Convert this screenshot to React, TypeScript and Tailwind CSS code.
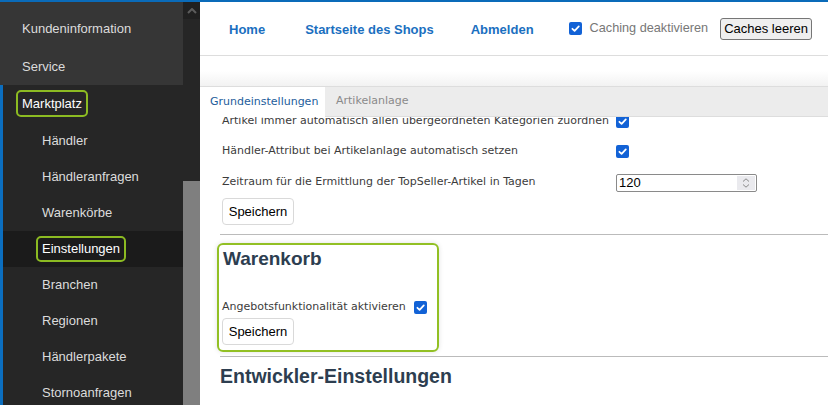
import React from 'react';

const SANS = { fontFamily: '"Liberation Sans", Arial, sans-serif' };
const TAHOMA = { fontFamily: '"DejaVu Sans", Verdana, sans-serif' };

const SUB_ITEMS = [
  { label: 'Händler', h: 'h-[37px]' },
  { label: 'Händleranfragen', h: 'h-[36px]' },
  { label: 'Warenkörbe', h: 'h-[36px]' },
  { label: 'Einstellungen', h: 'h-[36px]', active: true },
  { label: 'Branchen', h: 'h-[36px]' },
  { label: 'Regionen', h: 'h-[36px]' },
  { label: 'Händlerpakete', h: 'h-[36px]' },
  { label: 'Stornoanfragen', h: 'h-[36px]' },
];

function Check() {
  return (
    <span className="inline-flex h-[13px] w-[13px] shrink-0 items-center justify-center rounded-[2px] bg-[#1262d6]">
      <svg viewBox="0 0 12 12" className="h-[11px] w-[11px]">
        <path
          d="M2.6 6.3 L5 8.6 L9.6 3.6"
          stroke="white"
          strokeWidth="1.9"
          fill="none"
          strokeLinecap="round"
          strokeLinejoin="round"
        />
      </svg>
    </span>
  );
}

function SaveButton() {
  return (
    <button
      type="button"
      className="flex h-[27px] w-[72px] items-center justify-center rounded-[4px] border border-[#d9d9d9] bg-white text-[13px] text-black"
      style={SANS}
    >
      Speichern
    </button>
  );
}

function Sidebar() {
  return (
    <div className="flex h-full w-[200px] shrink-0" style={SANS}>
      <div className="flex w-[183px] flex-col">
        {/* top level */}
        <div className="bg-[#363636] pt-[8px] text-[13px] text-[#dcdcdc]">
          <div className="flex h-[38px] items-center pl-[22px]">Kundeninformation</div>
          <div className="flex h-[37px] items-center pl-[22px]">Service</div>
        </div>
        {/* Marktplatz group */}
        <div className="flex-1 border-l-[3px] border-[#0b6ebf] bg-[#262626] text-[13px] text-[#dcdcdc]">
          <div className="flex h-[37px] items-center pl-[13px]">
            <span className="rounded-[5px] border-2 border-[#8cbb22] px-[4px] py-[4px] leading-[15px] text-white">
              Marktplatz
            </span>
          </div>
          {SUB_ITEMS.map((item) => (
            <div
              key={item.label}
              className={`flex items-center ${item.h} ${
                item.active ? 'bg-[#1b1b1b] pl-[33px] text-white' : 'pl-[39px]'
              }`}
            >
              {item.active ? (
                <span className="rounded-[5px] border-2 border-[#8cbb22] px-[4px] py-[3px] leading-[16px]">
                  {item.label}
                </span>
              ) : (
                item.label
              )}
            </div>
          ))}
        </div>
      </div>
      {/* scrollbar */}
      <div className="flex w-[17px] flex-col bg-[#262626]">
        <div className="flex h-[17px] items-center justify-center bg-[#202020]">
          <svg viewBox="0 0 10 6" className="h-[6px] w-[10px]">
            <path d="M1 5 L5 1 L9 5" stroke="#5c5c5c" strokeWidth="2" fill="none" />
          </svg>
        </div>
        <div className="h-[162px]" />
        <div className="flex-1 bg-[#7f7f7f]" />
      </div>
    </div>
  );
}

function Header() {
  return (
    <div
      className="flex h-[54px] items-center border-b border-[#dddddd] bg-white text-[13px]"
      style={SANS}
    >
      <a className="ml-[29px] pt-[3px] font-bold text-[#1b6fc0]">Home</a>
      <a className="ml-[40px] pt-[3px] font-bold text-[#1b6fc0]">Startseite des Shops</a>
      <a className="ml-[37px] pt-[3px] font-bold text-[#1b6fc0]">Abmelden</a>
      <div className="ml-[35px] flex items-center gap-[8px]">
        <Check />
        <span className="text-[12.7px] text-[#777777]">Caching deaktivieren</span>
      </div>
      <button
        type="button"
        className="ml-[12px] flex h-[22px] w-[92px] items-center justify-center rounded-[3px] border border-[#767676] bg-[#efefef] text-[13px] text-black"
      >
        Caches leeren
      </button>
    </div>
  );
}

function Tabs() {
  return (
    <div className="flex h-[31px] border-y border-[#dddddd] bg-[#ececec] text-[11px]" style={TAHOMA}>
      <div className="-mb-px flex w-[125px] items-center bg-white pl-[10px] text-[#1d5d9b]">
        Grundeinstellungen
      </div>
      <div className="flex items-center pl-[11px] text-[#8a8a8a]">Artikelanlage</div>
    </div>
  );
}

function SettingRow({ label, h, children }: { label: string; h: string; children: React.ReactNode }) {
  return (
    <div className={`flex items-center ${h}`}>
      <div className="w-[394px] text-[11px] text-[#3c3c3c]">{label}</div>
      {children}
    </div>
  );
}

function NumberInput() {
  return (
    <div className="flex h-[18px] w-[141px] items-center rounded-[2px] border border-[#8a8a8a] bg-white">
      <span className="flex-1 pl-[2px] text-[13px] leading-none text-black" style={SANS}>
        120
      </span>
      <span className="mr-px flex h-[14px] w-[18px] flex-col items-center justify-center bg-[#eaeaee]">
        <svg viewBox="0 0 10 12" className="h-[12px] w-[10px]">
          <path d="M2 4.5 L5 1.8 L8 4.5" stroke="#8a8a8a" strokeWidth="1" fill="none" />
          <path d="M2 7.5 L5 10.2 L8 7.5" stroke="#8a8a8a" strokeWidth="1" fill="none" />
        </svg>
      </span>
    </div>
  );
}

function Content() {
  return (
    <div className="flex-1 overflow-hidden bg-white pl-[20px]" style={TAHOMA}>
      <div className="-mt-[11px] pl-[2px]">
        <SettingRow label="Artikel immer automatisch allen übergeordneten Kategorien zuordnen" h="h-[30px]">
          <Check />
        </SettingRow>
        <SettingRow label="Händler-Attribut bei Artikelanlage automatisch setzen" h="h-[31px]">
          <Check />
        </SettingRow>
        <SettingRow label="Zeitraum für die Ermittlung der TopSeller-Artikel in Tagen" h="h-[31px]">
          <NumberInput />
        </SettingRow>
        <SaveButton />
      </div>

      <div className="mt-[9px] border-t border-[#bbbbbb]" />

      {/* Warenkorb */}
      <div className="ml-[-3px] mt-[8px] w-[222px] rounded-[6px] border-2 border-[#92c024] pb-[5px] pl-[3px] pt-[3px] shadow-[0_0_5px_rgba(0,0,0,0.12)]">
        <h2 className="ml-[1px] text-[19px] font-bold leading-[22px] text-[#2d3e50]" style={SANS}>
          Warenkorb
        </h2>
        <div className="mt-[29px] flex h-[17px] items-center gap-[8px]">
          <span className="text-[11px] text-[#3c3c3c]">Angebotsfunktionalität aktivieren</span>
          <Check />
        </div>
        <div className="mt-[2px]">
          <SaveButton />
        </div>
      </div>

      <div className="mt-[4px] border-t border-[#bbbbbb]" />
      <h2 className="mt-[8px] text-[19.5px] font-bold leading-[22px] text-[#2d3e50]" style={SANS}>
        Entwickler-Einstellungen
      </h2>
    </div>
  );
}

export default function App() {
  return (
    <div className="flex h-[405px] w-[828px] flex-col overflow-hidden border-t-2 border-[#0a6bb9] bg-white">
      <div className="flex min-h-0 flex-1">
        <Sidebar />
        <div className="flex min-w-0 flex-1 flex-col">
          <Header />
          <div className="h-[30px] bg-gradient-to-b from-white from-50% to-[#f2f2f2]" />
          <Tabs />
          <Content />
        </div>
      </div>
    </div>
  );
}
